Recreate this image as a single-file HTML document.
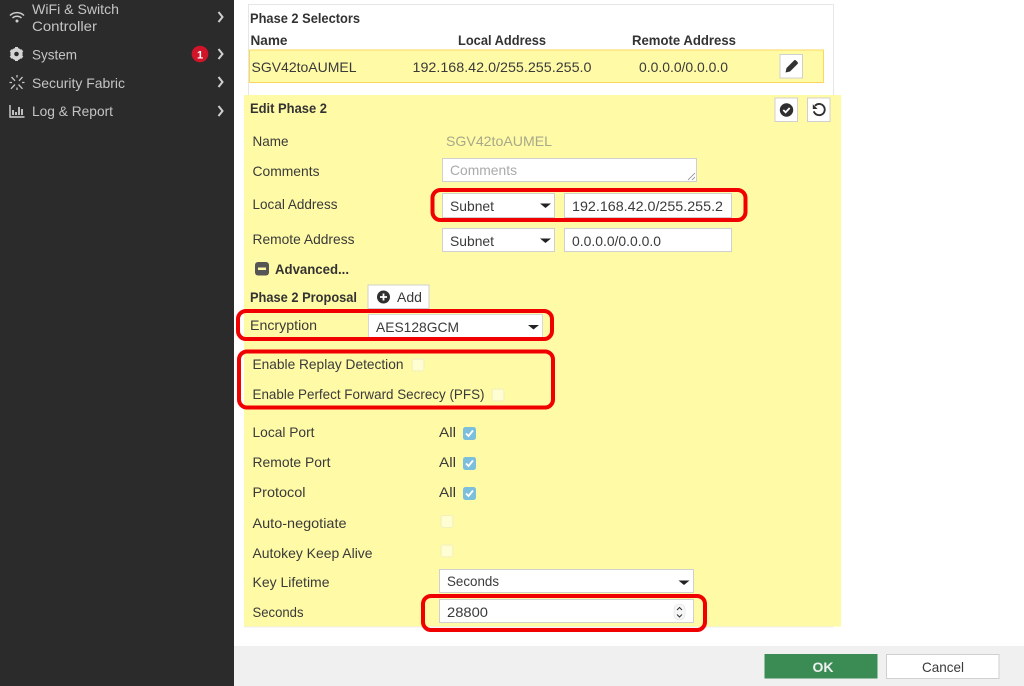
<!DOCTYPE html>
<html><head><meta charset="utf-8"><style>
html,body{margin:0;padding:0;background:#fff;width:1024px;height:686px;overflow:hidden}
svg{display:block;filter:blur(.3px)}
text{font-family:"Liberation Sans",sans-serif;font-size:14px;fill:#3a3a3a}
.b{font-weight:bold;fill:#333}
.s{fill:#c4c4c4}
.f{fill:#fff;stroke:#d0d0d0;stroke-width:1}
.r{fill:none;stroke:#f00000;stroke-width:4}
.cb{fill:#fffdd2;stroke:#f3f0ba;stroke-width:1}
.ck{fill:#7cbfdc}
.tk{fill:none;stroke:#fff;stroke-width:1.8}
.ch{fill:none;stroke:#cfcfcf;stroke-width:2}
</style></head><body>
<svg width="1024" height="686" viewBox="0 0 1024 686" xmlns="http://www.w3.org/2000/svg">
<rect width="1024" height="686" fill="#fff"/>
<rect x="0" y="0" width="234" height="686" fill="#2b2b2b"/>
<rect x="234" y="646" width="790" height="40" fill="#f0f0f0"/>

<!-- sidebar -->
<text class="s" x="32" y="14" textLength="87" lengthAdjust="spacingAndGlyphs">WiFi &amp; Switch</text>
<text class="s" x="32" y="31" textLength="65" lengthAdjust="spacingAndGlyphs">Controller</text>
<text class="s" x="32" y="59.500" textLength="45" lengthAdjust="spacingAndGlyphs">System</text>
<text class="s" x="32" y="88" textLength="93" lengthAdjust="spacingAndGlyphs">Security Fabric</text>
<text class="s" x="32" y="116" textLength="81" lengthAdjust="spacingAndGlyphs">Log &amp; Report</text>
<path d="M10 15.500a10 10 0 0 1 14 0M12.500 18a6.500 6.500 0 0 1 9 0" fill="none" stroke="#cfcfcf" stroke-width="1.500"/>
<circle cx="17" cy="21" r="1.500" fill="#cfcfcf"/>
<circle cx="16.500" cy="54" r="4.200" fill="none" stroke="#d4d4d4" stroke-width="3.800"/>
<path d="M16.500 47v2.500M16.500 58.500v2.500M10.500 50.500l2.200 1.300M20.300 56.200l2.200 1.300M10.500 57.500l2.200-1.300M20.300 51.800l2.200-1.300" stroke="#d4d4d4" stroke-width="3"/>
<path d="M11.500 77l3.500 3.800M18.500 84.500l4 4.300M22.500 77l-3.500 3.800M15 84.500l-4 4.300M17 75v2.500M17 87.500v2.500M9.500 82.500h2.500M22 82.500h2.500" stroke="#c4c4c4" stroke-width="1.300" fill="none"/>
<path d="M10 105v12h14.500" fill="none" stroke="#cfcfcf" stroke-width="1.400"/>
<path d="M13 110v5M16 112v3M19 107v8M22 109v6" stroke="#cfcfcf" stroke-width="1.800"/>
<path class="ch" d="M218.500 12l4 5-4 5M218.500 49l4 5-4 5M218.500 77l4 5-4 5M218.500 106l4 5-4 5"/>
<circle cx="200" cy="54" r="8.300" fill="#d2142a"/>
<text x="200" y="58.500" text-anchor="middle" style="font-size:11px;font-weight:bold;fill:#fff">1</text>

<!-- selector box -->
<rect x="248.500" y="4.500" width="585" height="100" fill="#fff" stroke="#e6e6e6"/>
<text class="b" x="250" y="23" textLength="110" lengthAdjust="spacingAndGlyphs">Phase 2 Selectors</text>
<text class="b" x="250.500" y="45" textLength="37" lengthAdjust="spacingAndGlyphs">Name</text>
<text class="b" x="458" y="45" textLength="88" lengthAdjust="spacingAndGlyphs">Local Address</text>
<text class="b" x="632" y="45" textLength="104" lengthAdjust="spacingAndGlyphs">Remote Address</text>
<rect x="249.500" y="50" width="574" height="32.500" fill="#fffaa6" stroke="#fdd85d"/>
<text x="251.500" y="72" textLength="105" lengthAdjust="spacingAndGlyphs">SGV42toAUMEL</text>
<text x="412.500" y="72" textLength="179" lengthAdjust="spacingAndGlyphs">192.168.42.0/255.255.255.0</text>
<text x="639" y="72" textLength="89" lengthAdjust="spacingAndGlyphs">0.0.0.0/0.0.0.0</text>
<rect class="f" x="780" y="54.500" width="22.500" height="23.500"/>
<path d="M785.500 72.500l1-4.500 7.500-7.500a1.300 1.300 0 0 1 2 0l1.500 1.500a1.300 1.300 0 0 1 0 2l-7.500 7.500z" fill="#333"/>

<!-- edit panel -->
<rect x="244" y="95" width="597" height="531.500" fill="#fffaa6"/>
<rect x="244" y="626.500" width="589.500" height="1" fill="#eeeeee"/>
<text class="b" x="250" y="113" textLength="77" lengthAdjust="spacingAndGlyphs">Edit Phase 2</text>
<rect class="f" x="775" y="98" width="22.500" height="23.500"/>
<circle cx="786.500" cy="110" r="6.700" fill="#2f2f2f"/>
<path d="M783.300 110l2.300 2.300 4.100-4.300" fill="none" stroke="#fff" stroke-width="1.800"/>
<rect class="f" x="807.500" y="98" width="22.500" height="23.500"/>
<path d="M815 105.800a5.600 5.600 0 1 1-1.200 5.500" fill="none" stroke="#2f2f2f" stroke-width="1.900"/>
<path d="M812.800 104.200v4.800h4.800z" fill="#2f2f2f"/>

<!-- labels -->
<text x="252.500" y="146" textLength="36" lengthAdjust="spacingAndGlyphs">Name</text>
<text x="446" y="146" textLength="106" lengthAdjust="spacingAndGlyphs" style="fill:#a8a88a">SGV42toAUMEL</text>
<text x="252.500" y="176" textLength="67" lengthAdjust="spacingAndGlyphs">Comments</text>
<rect class="f" x="442.500" y="158.500" width="254" height="23"/>
<text x="450" y="175" textLength="67" lengthAdjust="spacingAndGlyphs" style="fill:#aaa">Comments</text>
<path d="M688 180l7-7M692 180l3-3" stroke="#888" stroke-width="0.800"/>

<text x="252.500" y="209" textLength="85" lengthAdjust="spacingAndGlyphs">Local Address</text>
<rect class="f" x="442.500" y="193.500" width="112" height="24"/>
<text x="450" y="211" textLength="44" lengthAdjust="spacingAndGlyphs">Subnet</text>
<path d="M540 203.500h11l-5.500 4.500z" fill="#222"/>
<rect class="f" x="564.500" y="193.500" width="167" height="24"/>
<text x="572" y="211" textLength="151" lengthAdjust="spacingAndGlyphs">192.168.42.0/255.255.2</text>

<text x="252.500" y="244" textLength="102" lengthAdjust="spacingAndGlyphs">Remote Address</text>
<rect class="f" x="442.500" y="228.500" width="112" height="23"/>
<text x="450" y="246" textLength="44" lengthAdjust="spacingAndGlyphs">Subnet</text>
<path d="M540 238.500h11l-5.500 4.500z" fill="#222"/>
<rect class="f" x="564.500" y="228.500" width="167" height="23"/>
<text x="572" y="246" textLength="89" lengthAdjust="spacingAndGlyphs">0.0.0.0/0.0.0.0</text>

<rect x="255" y="262" width="14" height="13.500" rx="3" fill="#555"/>
<rect x="258" y="267.500" width="8" height="2.500" fill="#fffaa6"/>
<text class="b" x="275" y="274" textLength="74" lengthAdjust="spacingAndGlyphs">Advanced...</text>

<text class="b" x="250" y="302" textLength="107" lengthAdjust="spacingAndGlyphs">Phase 2 Proposal</text>
<rect class="f" x="368" y="285" width="61" height="23.500"/>
<circle cx="383.500" cy="297" r="6.500" fill="#2f2f2f"/>
<path d="M380 297h7M383.500 293.500v7" stroke="#fff" stroke-width="1.800"/>
<text x="397" y="302" textLength="25" lengthAdjust="spacingAndGlyphs">Add</text>

<text x="250" y="330" textLength="67" lengthAdjust="spacingAndGlyphs">Encryption</text>
<rect x="368.500" y="314.500" width="174" height="24" fill="#fff" stroke="#d8d8d8"/>
<text x="376" y="332" textLength="83" lengthAdjust="spacingAndGlyphs">AES128GCM</text>
<path d="M528 325h11l-5.500 4.500z" fill="#222"/>

<text x="252.500" y="369" textLength="151" lengthAdjust="spacingAndGlyphs">Enable Replay Detection</text>
<rect class="cb" x="412" y="359" width="12" height="12" rx="2.500"/>
<text x="252.500" y="399" textLength="232" lengthAdjust="spacingAndGlyphs">Enable Perfect Forward Secrecy (PFS)</text>
<rect class="cb" x="492" y="389" width="12" height="12" rx="2.500"/>

<text x="252.500" y="437" textLength="62" lengthAdjust="spacingAndGlyphs">Local Port</text>
<text x="439" y="437" textLength="17" lengthAdjust="spacingAndGlyphs">All</text>
<rect class="ck" x="463" y="427" width="13" height="13" rx="2.500"/>
<path class="tk" d="M466 433.500l2.500 2.500 4.500-5.500"/>
<text x="252.500" y="467" textLength="78" lengthAdjust="spacingAndGlyphs">Remote Port</text>
<text x="439" y="467" textLength="17" lengthAdjust="spacingAndGlyphs">All</text>
<rect class="ck" x="463" y="457" width="13" height="13" rx="2.500"/>
<path class="tk" d="M466 463.500l2.500 2.500 4.500-5.500"/>
<text x="252.500" y="497" textLength="53" lengthAdjust="spacingAndGlyphs">Protocol</text>
<text x="439" y="497" textLength="17" lengthAdjust="spacingAndGlyphs">All</text>
<rect class="ck" x="463" y="487" width="13" height="13" rx="2.500"/>
<path class="tk" d="M466 493.500l2.500 2.500 4.500-5.500"/>

<text x="252.500" y="528" textLength="94" lengthAdjust="spacingAndGlyphs">Auto-negotiate</text>
<rect class="cb" x="441" y="515.500" width="12" height="12" rx="2.500"/>
<text x="252.500" y="558" textLength="120" lengthAdjust="spacingAndGlyphs">Autokey Keep Alive</text>
<rect class="cb" x="441" y="545" width="12" height="12" rx="2.500"/>

<text x="252.500" y="587" textLength="77" lengthAdjust="spacingAndGlyphs">Key Lifetime</text>
<rect class="f" x="439.500" y="569.500" width="254" height="23"/>
<text x="447" y="586" textLength="52" lengthAdjust="spacingAndGlyphs">Seconds</text>
<path d="M678.500 580.500h11l-5.500 4.500z" fill="#222"/>
<text x="252.500" y="617" textLength="51" lengthAdjust="spacingAndGlyphs">Seconds</text>
<rect class="f" x="439.500" y="599.500" width="254" height="23"/>
<text x="447" y="617" textLength="41" lengthAdjust="spacingAndGlyphs">28800</text>
<rect x="674" y="604" width="11" height="16" rx="5.500" fill="#f6f6f6" stroke="#e2e2e2" stroke-width="0.600"/>
<path d="M677 610l2.500-2.500 2.500 2.500M677 614.500l2.500 2.500 2.500-2.500" fill="none" stroke="#333" stroke-width="1"/>

<!-- red highlights -->
<rect class="r" x="432.500" y="190" width="313" height="30" rx="8"/>
<rect class="r" x="238" y="311" width="314" height="28" rx="8"/>
<rect class="r" x="239" y="351.500" width="314" height="56" rx="8"/>
<rect class="r" x="423" y="596" width="282" height="34" rx="8"/>

<!-- footer -->
<rect x="764.500" y="654" width="113" height="24.500" fill="#3b8c54"/>
<text x="823" y="672" text-anchor="middle" style="font-weight:bold;fill:#f0f0f0">OK</text>
<rect x="886.500" y="654.500" width="112.500" height="24" fill="#fff" stroke="#d0d0d0"/>
<text x="943" y="672" text-anchor="middle" textLength="42" lengthAdjust="spacingAndGlyphs">Cancel</text>
</svg>
</body></html>
